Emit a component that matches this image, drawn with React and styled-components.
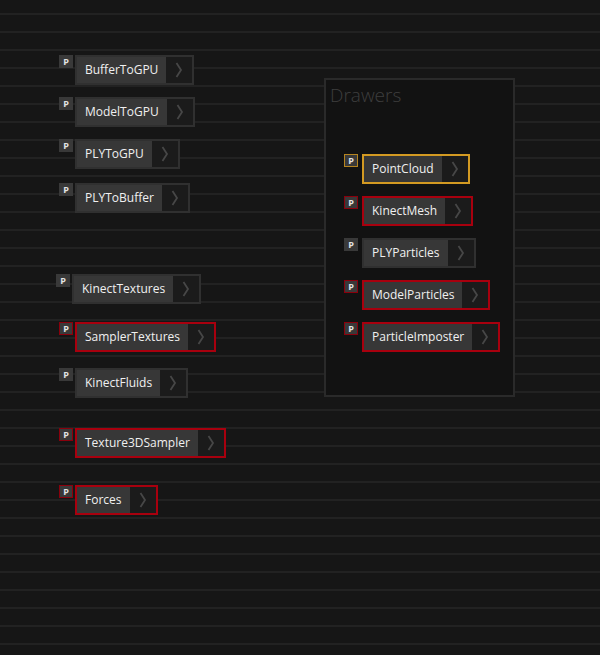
import styled, { createGlobalStyle, css } from "styled-components";

const GlobalStyle = createGlobalStyle`
  html, body {
    margin: 0;
    padding: 0;
    background: #161616;
  }
  body {
    font-family: "Open Sans", "Noto Sans", sans-serif;
  }
`;

const variants = {
  plain: { border: "#303030", badge: "#393939" },
  red: { border: "#a8000e", badge: "#8a000c" },
  orange: { border: "#d39a22", badge: "#b58420" },
};

const Canvas = styled.div`
  position: relative;
  width: 600px;
  height: 655px;
  overflow: hidden;
  background: repeating-linear-gradient(
    to bottom,
    #161616 0px,
    #161616 13px,
    #222222 13px,
    #222222 15px,
    #161616 15px,
    #161616 18px
  );
`;

// nodes sit on the graph canvas at their own coordinates
const FreeNode = styled.div`
  position: absolute;
  left: ${(p) => p.$x}px;
  top: ${(p) => p.$y}px;
`;

const NodeRow = styled.div`
  display: flex;
  align-items: flex-start;
  gap: ${(p) => p.$gap || 2}px;
`;

const PBadge = styled.div`
  width: 14px;
  height: 13px;
  box-sizing: border-box;
  background: #393939;
  color: #e4e4e4;
  font-size: 9px;
  font-weight: 700;
  line-height: 11px;
  text-align: center;
  border: 1px solid ${(p) => variants[p.$variant].badge};
`;

const NodeBox = styled.div`
  display: flex;
  height: 30px;
  box-sizing: border-box;
  border: 2px solid ${(p) => variants[p.$variant].border};
  ${(p) =>
    p.$variant !== "plain" &&
    css`
      box-shadow: 0 0 0 0 transparent;
    `}
`;

const Label = styled.div`
  background: #373737;
  color: #f0f0f0;
  font-size: 12px;
  font-weight: 500;
  line-height: 26px;
  padding: 0 8px;
  white-space: nowrap;
`;

const Arrow = styled.div`
  width: 26px;
  background: #1b1b1b;
  display: flex;
  align-items: center;
  justify-content: center;
`;

const Group = styled.div`
  position: absolute;
  left: 324px;
  top: 78px;
  width: 191px;
  height: 319px;
  box-sizing: border-box;
  border: 2px solid #2a2a2a;
  background: #121212;
  padding: 2px 0 0 4px;
`;

const GroupTitle = styled.div`
  color: #3e3e3e;
  font-size: 19px;
  font-weight: 300;
  line-height: 26px;
`;

const GroupList = styled.div`
  display: flex;
  flex-direction: column;
  align-items: flex-start;
  gap: 12px;
  margin: 46px 0 0 14px;
`;

function Chevron() {
  return (
    <svg width="8" height="16" viewBox="0 0 8 16">
      <polyline points="1.5,1 6,8 1.5,15" fill="none" stroke="#474747" strokeWidth="1.8" />
    </svg>
  );
}

function Node({ name, variant = "plain", gap }) {
  return (
    <NodeRow $gap={gap}>
      <PBadge $variant={variant}>P</PBadge>
      <NodeBox $variant={variant}>
        <Label>{name}</Label>
        <Arrow>
          <Chevron />
        </Arrow>
      </NodeBox>
    </NodeRow>
  );
}

const looseNodes = [
  { name: "BufferToGPU", x: 59, y: 55 },
  { name: "ModelToGPU", x: 59, y: 97 },
  { name: "PLYToGPU", x: 59, y: 139 },
  { name: "PLYToBuffer", x: 59, y: 183 },
  { name: "KinectTextures", x: 56, y: 274 },
  { name: "SamplerTextures", x: 59, y: 322, variant: "red" },
  { name: "KinectFluids", x: 59, y: 368 },
  { name: "Texture3DSampler", x: 59, y: 428, variant: "red" },
  { name: "Forces", x: 59, y: 485, variant: "red" },
];

const drawers = [
  { name: "PointCloud", variant: "orange" },
  { name: "KinectMesh", variant: "red" },
  { name: "PLYParticles" },
  { name: "ModelParticles", variant: "red" },
  { name: "ParticleImposter", variant: "red" },
];

export default function App() {
  return (
    <>
      <GlobalStyle />
      <Canvas>
        {looseNodes.map((n) => (
          <FreeNode key={n.name} $x={n.x} $y={n.y}>
            <Node name={n.name} variant={n.variant} />
          </FreeNode>
        ))}
        <Group>
          <GroupTitle>Drawers</GroupTitle>
          <GroupList>
            {drawers.map((n) => (
              <Node key={n.name} name={n.name} variant={n.variant} gap={4} />
            ))}
          </GroupList>
        </Group>
      </Canvas>
    </>
  );
}
